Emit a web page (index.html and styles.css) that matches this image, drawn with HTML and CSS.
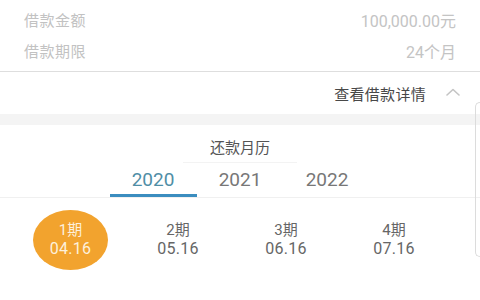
FILE: index.html
```html
<!DOCTYPE html>
<html lang="zh-CN">
<head>
<meta charset="utf-8">
<link rel="stylesheet" href="styles.css">
</head>
<body>
<div class="page">
  <section class="info">
    <div class="row"><span class="label">借款金额</span><span class="value">100,000.00元</span></div>
    <div class="row"><span class="label">借款期限</span><span class="value">24个月</span></div>
  </section>
  <div class="details">
    <span class="details-text">查看借款详情</span>
    <svg class="chevron" width="14" height="8" viewBox="0 0 14 8"><path d="M1 7 L7 1.5 L13 7" fill="none" stroke="#c4c4c4" stroke-width="1.6" stroke-linecap="round" stroke-linejoin="round"/></svg>
  </div>
  <div class="band"></div>
  <section class="calendar">
    <div class="title">还款月历</div>
    <div class="tabs">
      <div class="tab active">2020</div>
      <div class="tab">2021</div>
      <div class="tab">2022</div>
    </div>
    <div class="periods">
      <div class="period current"><span class="pn">1期</span><span class="pd">04.16</span></div>
      <div class="period"><span class="pn">2期</span><span class="pd">05.16</span></div>
      <div class="period"><span class="pn">3期</span><span class="pd">06.16</span></div>
      <div class="period"><span class="pn">4期</span><span class="pd">07.16</span></div>
    </div>
  </section>
  <div class="side-card"></div>
</div>
</body>
</html>
```
FILE: styles.css
```css
html, body {
  margin: 0;
  padding: 0;
  background: #fff;
}
body {
  width: 480px;
  height: 300px;
  overflow: hidden;
  font-family: Roboto, "Noto Sans CJK SC", sans-serif;
}
.page {
  position: relative;
  width: 480px;
  height: 300px;
  overflow: hidden;
}
.info {
  padding: 4px 24px 5px 24px;
  border-bottom: 1px solid #dedede;
}
.row {
  height: 31px;
  display: flex;
  align-items: center;
  justify-content: space-between;
}
.label {
  font-size: 15px;
  color: #c2c2c2;
  letter-spacing: 0.5px;
}
.value {
  font-size: 16px;
  color: #c4c4c4;
}
.details {
  height: 42px;
  display: flex;
  align-items: center;
  justify-content: flex-end;
  padding-right: 20px;
  gap: 20px;
}
.details-text {
  font-size: 15px;
  color: #484848;
  letter-spacing: 0.3px;
}
.chevron {
  display: block;
  margin-top: -2px;
}
.band {
  height: 11px;
  background: #f4f4f4;
}
.calendar {
  display: flex;
  flex-direction: column;
  align-items: center;
}
.title {
  margin-top: 10px;
  height: 27px;
  line-height: 27px;
  font-size: 15px;
  color: #555;
  width: 114px;
  text-align: center;
  border-bottom: 1px solid #f3f3f3;
}
.tabs {
  display: flex;
  justify-content: center;
  width: 100%;
  border-bottom: 1px solid #f0f0f0;
}
.tab {
  width: 87px;
  height: 34px;
  line-height: 34px;
  text-align: center;
  font-size: 19px;
  color: #777;
  box-sizing: border-box;
  border-bottom: 3px solid transparent;
}
.tab.active {
  color: #4f8ea6;
  border-bottom-color: #3b8dbf;
}
.periods {
  display: flex;
  align-self: flex-start;
  margin: 12px 0 0 16px;
}
.period {
  width: 108px;
  display: flex;
  flex-direction: column;
  align-items: center;
  justify-content: center;
  height: 60px;
}
.period.current {
  width: 75px;
  margin: 0 16px 0 17px;
  background: #f2a32e;
  border-radius: 50%;
}
.pn {
  font-size: 15px;
  line-height: 18px;
  color: #666;
}
.pd {
  font-size: 16px;
  line-height: 20px;
  color: #666;
  letter-spacing: 0.3px;
}
.current .pn,
.current .pd {
  color: #fdf0dc;
}
.side-card {
  position: absolute;
  left: 475px;
  top: 102px;
  width: 4px;
  height: 153px;
  border: 1px solid #dcdcdc;
  border-right: none;
  border-radius: 6px 0 0 6px;
}
```
